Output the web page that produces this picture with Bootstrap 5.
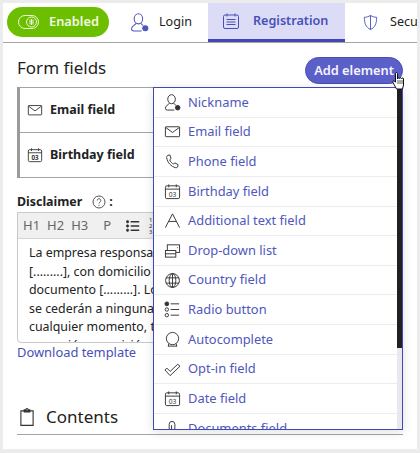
<!DOCTYPE html>
<html lang="en">
<head>
  <meta charset="UTF-8">
  <title>Form fields</title>
  <link href="https://cdn.jsdelivr.net/npm/bootstrap@5.3.3/dist/css/bootstrap.min.css" rel="stylesheet">
  <style>
    html, body { height: 453px; overflow: hidden; }
    body { background: #ececec; padding: 3px 3px 4px 3px; font-family: "Noto Sans", "Open Sans", sans-serif; color: #222; font-size: 13px; }
    .panel { background: #fff; height: 446px; position: relative; overflow: hidden; }
    .tabbar { height: 40px; border-bottom: 1px solid #a4a4a4; white-space: nowrap; overflow: hidden; }
    .state-pill { width: 102px; height: 30px; margin: 4px 0 0 4px; background: #6cbf00; color: #f2f9e4; border-radius: 15px; font-weight: 600; font-size: 12.8px; padding-left: 11px; gap: 9px; flex: none; }
    .tab-item { height: 39px; font-size: 12.6px; flex: none; }
    .tab-login { width: 99px; padding-left: 21px; gap: 10px; }
    .tab-reg { width: 137px; padding-left: 14px; gap: 13px; background: #dcdcf6; color: #4750b8; font-weight: 600; border-bottom: 3px solid #3f48b5; }
    .tab-sec { padding-left: 17px; gap: 11px; }
    .content-area { padding: 0 14px; }
    .title-row { height: 44px; padding-top: 11px; }
    .title-row h1 { font-size: 17px; font-weight: 400; margin: 0; line-height: 27px; }
    .add-btn { position: relative; top: 3px; height: 27px; width: 98px; padding: 0; border-radius: 14px; background: #5b60c9; border: 1px solid #474db8; color: #f4f4fd; font-size: 12.8px; font-weight: 600; }
    .field-box { border-left: 3px solid #9a9a9a; border-top: 1px solid #a4a4a4; }
    .field-row { height: 45px; padding-left: 7px; gap: 7px; border-bottom: 1px solid #a4a4a4; font-weight: 700; font-size: 12.5px; }
    .disc-label { margin-top: 14px; height: 20px; font-weight: 700; font-size: 12.4px; line-height: 20px; gap: 6px; }
    .disc-colon { margin-left: -3px; }
    .editor-box { height: 131px; overflow: hidden; border: 1px solid #c9c9c9; border-radius: 0 0 4px 4px; white-space: nowrap; }
    .editor-tools { height: 26px; background: #f0f0f0; border-bottom: 1px solid #d4d4d4; padding-left: 5px; gap: 7px; font-size: 13px; color: #666; }
    .order-nums { font-size: 6px; line-height: 6px; margin-left: 2px; color: #333; }
    .editor-text { padding: 5px 11px; font-size: 12.4px; line-height: 18.6px; }
    .tpl-link { display: block; color: #4750b8; text-decoration: none; font-size: 12.9px; line-height: 18px; }
    .contents-row { margin-top: 45px; height: 29px; border-bottom: 1px solid #a4a4a4; padding-bottom: 6px; gap: 9px; font-size: 17px; }
    .add-menu { position: absolute; left: 150px; top: 84px; width: 250px; height: 343px; background: #fff; border: 1px solid #3f48b5; overflow: hidden; padding-right: 5px; box-shadow: 0 2px 10px rgba(0,0,0,.12); }
    .add-menu .list-group-item { height: 29.65px; padding: 0 0 0 10px; gap: 7px; color: #4f57bd; font-size: 12.9px; border-color: #ececec; border-left: 0; border-right: 0; border-top: 0; border-radius: 0; white-space: nowrap; flex: none; }
    .menu-track { position: absolute; right: 0; top: 0; bottom: 0; width: 5px; background: #e8e8f0; }
    .menu-thumb { height: 260px; background: #202024; }
    .hand-cursor { position: absolute; left: 389px; top: 69px; }
    .ic { flex: none; fill: none; stroke: #333; stroke-width: 1; }
    .ic-blue { stroke: #4f57bd; }
    .ic-reg { stroke: #4750b8; }
  </style>
</head>
<body>

  <svg width="0" height="0" class="position-absolute">
    <symbol id="i-user" viewBox="0 0 18 18"><ellipse cx="8" cy="5.500" rx="4" ry="4.800"/><path d="M5.500 9.800C5 11.800 1.500 12 1.500 15a2 2 0 0 0 2 2H11M10.500 9.800c.3 1 1 1.500 2 2"/><circle cx="14.500" cy="14.500" r="2.400" fill="currentColor"/></symbol>
    <symbol id="i-mail" viewBox="0 0 18 18"><rect x="1.500" y="4" width="15" height="10.500" rx=".8"/><path d="M1.500 4.500 9 10l7.500-5.500"/></symbol>
    <symbol id="i-phone" viewBox="0 0 18 18"><path d="M4 2.500 6.200 2 7.500 6 6 7.200c.8 2 2.200 3.500 4.200 4.600l1.300-1.400 3.500 2-.7 2.400c-.3.700-1 1-1.800.8C7.500 14.500 3.500 10 2.800 4.800c-.1-1 .4-2 1.200-2.300z"/></symbol>
    <symbol id="i-cal" viewBox="0 0 18 18"><rect x="1.500" y="3" width="15" height="13.500" rx="1.500"/><path d="M1.500 6.500h15M5 1.500v3M13 1.500v3"/><text x="9" y="14.300" text-anchor="middle" font-size="7" stroke="none" fill="#333" font-family="Noto Sans">03</text></symbol>
    <symbol id="i-text" viewBox="0 0 18 18"><path d="M1.500 16.500 9 2l7.500 14.500M5 10h8" /></symbol>
    <symbol id="i-drop" viewBox="0 0 18 18"><rect x="3.500" y="3" width="13" height="8"/><rect x="1.500" y="9" width="11" height="7" fill="#fff"/><path d="M1.500 12.500h11M14 6h.8"/></symbol>
    <symbol id="i-globe" viewBox="0 0 18 18"><circle cx="9" cy="9" r="7.300"/><ellipse cx="9" cy="9" rx="3.500" ry="7.300"/><path d="M9 1.700v14.600M2.200 6.200h13.600M2.200 11.800h13.600"/></symbol>
    <symbol id="i-radio" viewBox="0 0 18 18"><circle cx="3" cy="3" r="2" fill="#333"/><circle cx="3" cy="9" r="1.800"/><circle cx="3" cy="15" r="1.800"/><path d="M7 3h9M7 9h9M7 15h9"/></symbol>
    <symbol id="i-auto" viewBox="0 0 18 18"><circle cx="9" cy="8" r="6.500"/><path d="M5 13.500 4.500 16.500M13 13.500l.5 3M4.500 16h9"/></symbol>
    <symbol id="i-check" viewBox="0 0 18 18"><path d="M1 9.500 3 7.500 6.500 11 14.500 3.500 17 5.500 6.500 15.500z"/></symbol>
    <symbol id="i-clip" viewBox="0 0 18 18"><path d="M5.500 16V4.500a3 3 0 0 1 6 0V16"/><path d="M8 16V5.500"/></symbol>
    <symbol id="i-shield" viewBox="0 0 18 18"><path d="M9 1.500c2 1.300 4.500 2 6.500 2C15.500 10 14 14 9 16.500 4 14 2.500 10 2.500 3.500c2 0 4.500-.7 6.500-2zM9 1.500v15"/></symbol>
    <symbol id="i-form" viewBox="0 0 18 18"><rect x="1.500" y="3" width="15" height="13.500" rx="1.500"/><path d="M5 1.500v3M13 1.500v3M4.500 7.500h9M4.500 10h9M4.500 12.500h9"/></symbol>
    <symbol id="i-board" viewBox="0 0 18 18"><path d="M3.500 3.500h11v13h-11zM6.500 3.500v-1h1.500a1 1 0 0 1 2 0h1.500v2h-5z"/></symbol>
    <symbol id="i-list" viewBox="0 0 18 18"><path d="M6 3.500h11M6 9h11M6 14.500h11" stroke-width="2"/><circle cx="2" cy="3.500" r="1.500" fill="#333"/><circle cx="2" cy="9" r="1.500" fill="#333"/><circle cx="2" cy="14.500" r="1.500" fill="#333"/></symbol>
  </svg>

  <div class="panel">
    <div class="tabbar d-flex">
      <div class="state-pill d-flex align-items-center">
        <svg width="22" height="14" viewBox="0 0 22 14" fill="none" stroke="#eef7d8"><rect x=".5" y=".5" width="20" height="13" rx="6.500"/><circle cx="13.500" cy="7" r="5"/><path d="M12 4.500v5M13.500 4v6M15 4.500v5"/></svg>
        <span>Enabled</span>
      </div>
      <div class="tab-item tab-login d-flex align-items-center"><svg class="ic ic-blue" width="19" height="19" style="color:#4f57bd"><use href="#i-user"/></svg><span>Login</span></div>
      <div class="tab-item tab-reg d-flex align-items-center"><svg class="ic ic-reg" width="18" height="18"><use href="#i-form"/></svg><span>Registration</span></div>
      <div class="tab-item tab-sec d-flex align-items-center"><svg class="ic ic-blue" width="17" height="17"><use href="#i-shield"/></svg><span>Security</span></div>
    </div>

    <div class="content-area">
      <div class="title-row d-flex justify-content-between align-items-start">
        <h1>Form fields</h1>
        <button class="btn add-btn" type="button">Add element</button>
      </div>

      <div class="field-box">
        <div class="field-row d-flex align-items-center"><svg class="ic" width="16" height="16"><use href="#i-mail"/></svg>Email field</div>
        <div class="field-row d-flex align-items-center"><svg class="ic" width="16" height="16"><use href="#i-cal"/></svg>Birthday field</div>
      </div>

      <div class="disc-label d-flex align-items-center">
        <span>Disclaimer</span>
        <svg class="ms-1" width="14" height="14" viewBox="0 0 14 14" fill="none" stroke="#555"><circle cx="7" cy="7" r="6"/><path d="M5.200 5.500a1.800 1.800 0 1 1 2.800 1.500c-.7.500-1 .8-1 1.500M7 9.800v1"/></svg>
        <span class="disc-colon">:</span>
      </div>

      <div class="editor-box">
        <div class="editor-tools d-flex align-items-center">
          <span>H1</span><span>H2</span><span>H3</span><span class="ms-2">P</span>
          <svg class="ic ms-2" width="14" height="14"><use href="#i-list"/></svg>
          <span class="order-nums">1<br>2<br>3</span>
        </div>
        <div class="editor-text">
          La empresa responsable<br>
          [.........], con domicilio en<br>
          documento [.........]. Los datos<br>
          se cederán a ninguna<br>
          cualquier momento, t<br>
          supresión, oposición
        </div>
      </div>
      <a class="tpl-link" href="#">Download template</a>

      <div class="contents-row d-flex align-items-center">
        <svg class="ic" width="20" height="20"><use href="#i-board"/></svg>
        <span>Contents</span>
      </div>
    </div>

    <div class="add-menu">
      <div class="list-group list-group-flush">
        <div class="list-group-item d-flex align-items-center"><svg class="ic" width="17" height="17" style="color:#333"><use href="#i-user"/></svg>Nickname</div>
        <div class="list-group-item d-flex align-items-center"><svg class="ic" width="17" height="17"><use href="#i-mail"/></svg>Email field</div>
        <div class="list-group-item d-flex align-items-center"><svg class="ic" width="17" height="17"><use href="#i-phone"/></svg>Phone field</div>
        <div class="list-group-item d-flex align-items-center"><svg class="ic" width="17" height="17"><use href="#i-cal"/></svg>Birthday field</div>
        <div class="list-group-item d-flex align-items-center"><svg class="ic" width="17" height="17"><use href="#i-text"/></svg>Additional text field</div>
        <div class="list-group-item d-flex align-items-center"><svg class="ic" width="17" height="17"><use href="#i-drop"/></svg>Drop-down list</div>
        <div class="list-group-item d-flex align-items-center"><svg class="ic" width="17" height="17"><use href="#i-globe"/></svg>Country field</div>
        <div class="list-group-item d-flex align-items-center"><svg class="ic" width="17" height="17"><use href="#i-radio"/></svg>Radio button</div>
        <div class="list-group-item d-flex align-items-center"><svg class="ic" width="17" height="17"><use href="#i-auto"/></svg>Autocomplete</div>
        <div class="list-group-item d-flex align-items-center"><svg class="ic" width="17" height="17"><use href="#i-check"/></svg>Opt-in field</div>
        <div class="list-group-item d-flex align-items-center"><svg class="ic" width="17" height="17"><use href="#i-cal"/></svg>Date field</div>
        <div class="list-group-item d-flex align-items-center"><svg class="ic" width="17" height="17"><use href="#i-clip"/></svg>Documents field</div>
      </div>
      <div class="menu-track"><div class="menu-thumb"></div></div>
    </div>

    <svg class="hand-cursor" width="13" height="19" viewBox="0 0 13 19"><path d="M3.500 1.500a1 1 0 0 1 2 0V7l.5-1a1 1 0 0 1 1.500.5l.5-.5a1 1 0 0 1 1.500.5l.5-.3a1 1 0 0 1 1.500.8V13l-1 4H4.500L1 10.500a1 1 0 0 1 1.500-1.300l1 1z" fill="#fff" stroke="#111" stroke-width="1"/><path d="M6 8v4M8 8v4M10 8v4" stroke="#111" stroke-width=".7"/></svg>
  </div>

</body>
</html>
